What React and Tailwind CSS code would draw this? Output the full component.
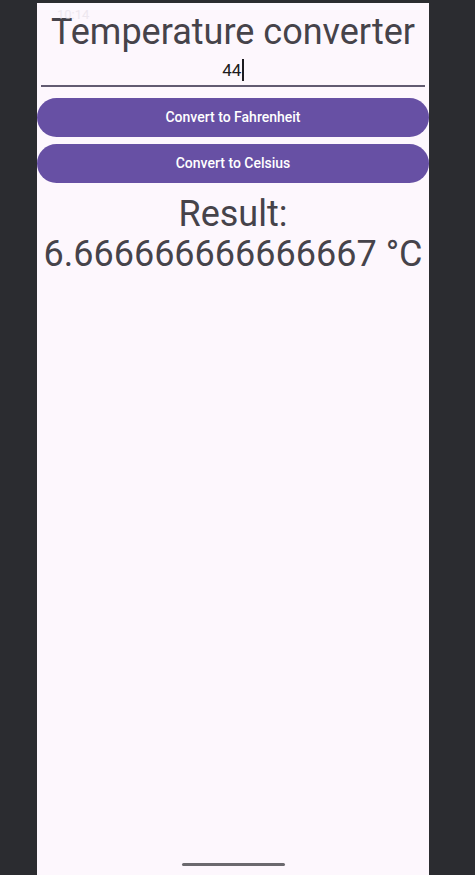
export default function App() {
  return (
    <div className="w-[475px] h-[875px] bg-[#2b2c30] flex pl-[37px] pt-[3px] overflow-hidden" style={{ fontFamily: "Roboto, 'Liberation Sans', sans-serif" }}>
      <div className="relative w-[392px] h-[872px] bg-[#fdf7fd] flex flex-col">
        <div className="absolute left-[20px] top-[2px] text-[13px] text-[#e4dde6] opacity-60">10:14</div>
        <h1 className="text-center text-[36px] leading-[40px] text-[#46434a] mt-[9px]">Temperature converter</h1>
        <div className="mx-[4px] mt-[3px] h-[32px] border-b-2 border-[#625b71] flex items-center justify-center">
          <span className="text-[17px] text-[#1d1b20] leading-none">44</span>
          <span className="w-[1.5px] h-[22px] bg-[#1d1b20] ml-[1px]"></span>
        </div>
        <button className="mt-[11px] h-[39px] w-full rounded-full bg-[#6750a4] text-white text-[14px] font-medium">Convert to Fahrenheit</button>
        <button className="mt-[7px] h-[39px] w-full rounded-full bg-[#6750a4] text-white text-[14px] font-medium">Convert to Celsius</button>
        <div className="mt-[11px] text-center text-[36px] leading-[40px] text-[#46434a]">
          <div>Result:</div>
          <div>6.666666666666667 °C</div>
        </div>
        <div className="absolute left-[145px] bottom-[9px] w-[103px] h-[3px] rounded-full bg-[#6b696e]"></div>
      </div>
    </div>
  );
}
